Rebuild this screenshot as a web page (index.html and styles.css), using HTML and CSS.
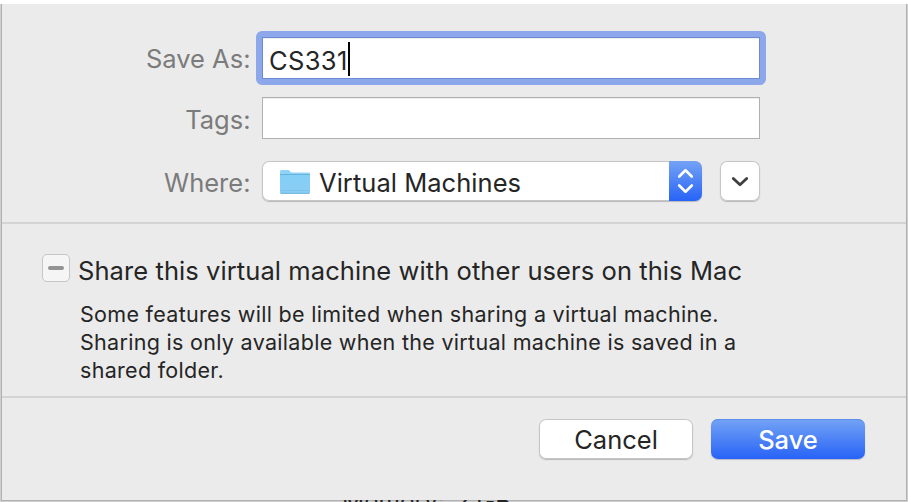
FILE: index.html
```
<!DOCTYPE html>
<html lang="en">
<head>
<meta charset="utf-8">
<title>Save</title>
<link rel="stylesheet" href="styles.css">
</head>
<body>
<main class="sheet">
  <section class="fields">
    <div class="row">
      <span class="label">Save As:</span>
      <div class="input focused"><span class="value">CS331</span><span class="caret"></span></div>
    </div>
    <div class="row row-tags">
      <span class="label label-tags">Tags:</span>
      <div class="input"></div>
    </div>
    <div class="row row-where">
      <span class="label">Where:</span>
      <div class="popup">
        <svg class="folder" width="32" height="26" viewBox="0 0 32 26">
          <defs><linearGradient id="f" x1="0" y1="0" x2="0" y2="1"><stop offset="0" stop-color="#83cff6"/><stop offset="1" stop-color="#8bcdf3"/></linearGradient></defs>
          <path d="M1 23V2.500Q1 1 2.500 1H9Q10.300 1 11 2.200T13 3.600H29.500Q31 3.600 31 5V23Z" fill="#8fd3f6"/>
          <path d="M1 6H31V23.200Q31 24.500 29.700 24.500H2.300Q1 24.500 1 23.200Z" fill="url(#f)"/>
          <path d="M1 5.500H31M1.500 24.300H30.500" stroke="#66b2da" stroke-width="1"/>
          <path d="M1.500 21.500H30.500" stroke="#77c0e8" stroke-width=".7"/>
        </svg>
        <span class="place">Virtual Machines</span>
        <span class="stepper">
          <svg width="33" height="40" viewBox="0 0 33 40" fill="none" stroke="#fff" stroke-width="2.600" stroke-linecap="round" stroke-linejoin="round"><path d="M10.200 15.500L16.500 9.300L22.800 15.500M10.200 24.500L16.500 30.700L22.800 24.500"/></svg>
        </span>
      </div>
      <div class="expand">
        <svg width="40" height="40" viewBox="0 0 40 40" fill="none" stroke="#3f3f3f" stroke-width="2.800" stroke-linecap="round" stroke-linejoin="round"><path d="M13.300 17.400L20 23.800L26.700 17.400"/></svg>
      </div>
    </div>
  </section>
  <section class="share">
    <div class="check"><span class="dash"></span></div>
    <div class="copy">
      <div class="title">Share this virtual machine with other users on this Mac</div>
      <div class="note">Some features will be limited when sharing a virtual machine.<br>Sharing is only available when the virtual machine is saved in a<br>shared folder.</div>
    </div>
  </section>
  <footer class="actions">
    <div class="button">Cancel</div>
    <div class="button primary">Save</div>
  </footer>
</main>
<div class="behind"><span>Memory:</span><span>2 GB</span></div>
</body>
</html>
```
FILE: styles.css
```
* { box-sizing: border-box; }
body {
  margin: 0;
  width: 908px;
  height: 502px;
  overflow: hidden;
  background: linear-gradient(#fff 4px, #d0d0d0 4px);
  font-family: Inter, "Liberation Sans", sans-serif;
  font-size: 25.5px;
  color: #252525;
  white-space: nowrap;
}
.sheet {
  width: 906px;
  height: 497px;
  margin: 4px 0 0 1px;
  border: 1px solid #b0b0b0;
  border-top: 0;
  background: #ebebeb;
}
.fields {
  height: 220px;
  padding: 33px 0 0;
  border-bottom: 2px solid #d4d4d4;
}
.row { display: flex; height: 42px; }
.row-tags { margin-top: 18px; }
.row-where { margin-top: 22px; height: 40px; }
.label {
  width: 248.5px;
  margin-right: 11.5px;
  text-align: right;
  color: #7b7b7b;
  line-height: 44px;
}
.label-tags { line-height: 46px; }
.input {
  display: flex;
  width: 498px;
  padding-left: 6px;
  border: 1px solid #b0b0b0;
  background: #fff;
  line-height: 46px;
  box-shadow: inset 0 1px #eeeeee;
}
.focused { position: relative; border-color: #6d8bd2; }
.focused::after {
  content: "";
  position: absolute;
  inset: -7px;
  border: 6px solid #8ca8eb;
  border-radius: 6px;
}
.value { letter-spacing: .35px; }
.caret { width: 2px; height: 34px; margin-top: 4px; background: #000; }
.popup {
  display: flex;
  width: 440px;
  border-radius: 7px;
  background: #fff;
  box-shadow: inset 0 0 0 1px #c5c5c5, 0 1px 1px #b8b8b8;
  line-height: 44px;
}
.folder { margin: 8px 8px 0 17px; }
.place { letter-spacing: .04px; }
.stepper {
  width: 33px;
  height: 40px;
  margin-left: auto;
  border-radius: 0 7px 7px 0;
  background: linear-gradient(#74a3f5, #2763f7);
}
.stepper svg, .expand svg { display: block; }
.expand {
  width: 40px;
  margin-left: 18px;
  border-radius: 7px;
  background: #fff;
  box-shadow: inset 0 0 0 1px #c5c5c5, 0 1px 1px #b8b8b8;
}
.share {
  display: flex;
  height: 174px;
  padding: 30px 0 0 40px;
  border-bottom: 2px solid #d4d4d4;
}
.check {
  display: flex;
  align-items: center;
  justify-content: center;
  width: 28px;
  height: 28px;
  margin-right: 8px;
  border: 1px solid #c6c6c6;
  border-radius: 5px;
  background: #f5f5f5;
}
.dash { width: 16px; height: 4px; border-radius: 2px; background: #949494; }
.title { height: 46px; line-height: 34px; letter-spacing: .08px; }
.note { padding-left: 2px; font-size: 21.5px; line-height: 28px; letter-spacing: .3px; }
.actions {
  display: flex;
  justify-content: flex-end;
  gap: 18px;
  padding: 21px 41px 0 0;
}
.button {
  width: 154px;
  height: 40px;
  border-radius: 7px;
  background: #fff;
  box-shadow: inset 0 0 0 1px #c5c5c5, 0 1px 1px #b8b8b8;
  line-height: 42px;
  text-align: center;
}
.primary {
  color: #fff;
  font-weight: 500;
  background: linear-gradient(#74a3f5, #2763f7);
  box-shadow: inset 0 1px #5b8eea, 0 1px 1px #b8b8c8;
}
.behind {
  display: flex;
  gap: 10px;
  height: 2px;
  margin: -1px 0 0 342px;
  overflow: hidden;
  font-size: 24.5px;
  line-height: 2px;
}
```
